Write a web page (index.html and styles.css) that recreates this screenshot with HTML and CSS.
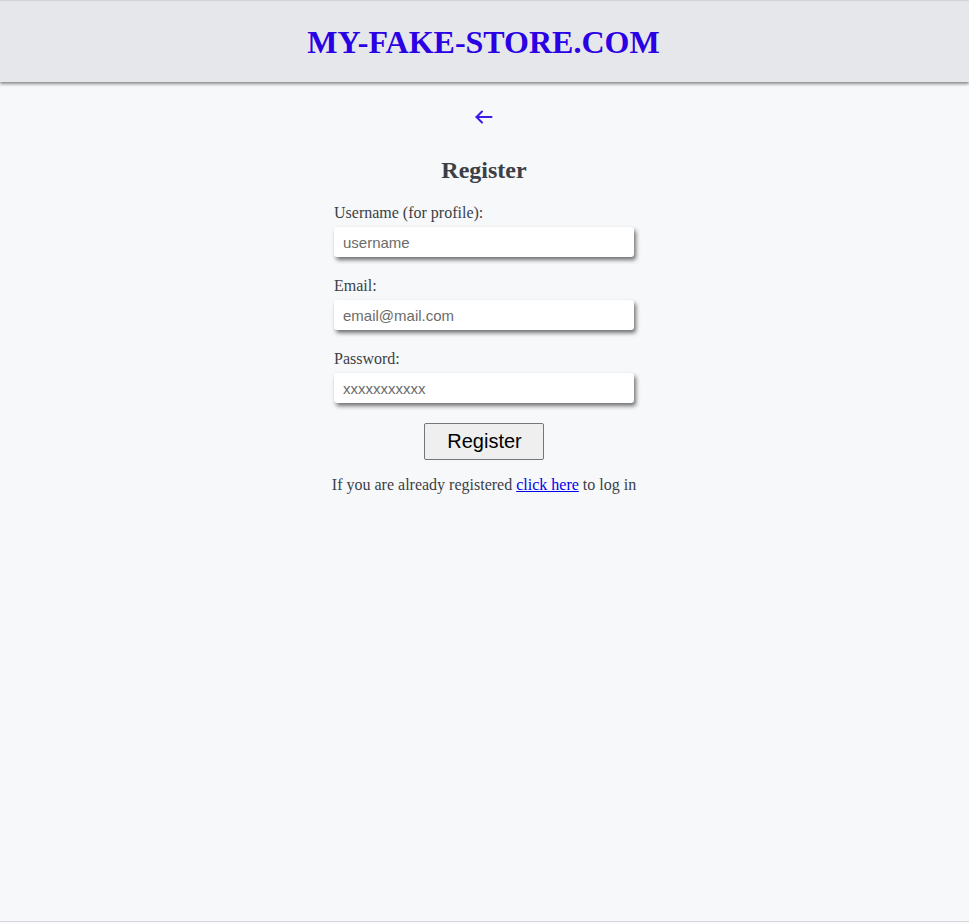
FILE: index.html
```html
<!DOCTYPE html>
<html lang="en">
<head>
<meta charset="utf-8">
<title>Register - MY-FAKE-STORE.COM</title>
<link rel="stylesheet" href="styles.css">
</head>
<body>
<div class="app">
  <header class="site-header">
    <h1 class="brand">MY-FAKE-STORE.COM</h1>
  </header>
  <main class="page">
    <a class="back" href="#" aria-label="Back">
      <svg width="20" height="20" viewBox="0 0 20 20" fill="none" stroke="currentColor" stroke-width="2" stroke-linecap="round" stroke-linejoin="round">
        <path d="M2.5 10 H17.5"/>
        <path d="M8 4.5 L2.5 10 L8 15.5"/>
      </svg>
    </a>
    <h2 class="title">Register</h2>
    <form class="form">
      <div class="field">
        <label class="label" for="username">Username (for profile):</label>
        <input class="input" id="username" type="text" placeholder="username">
      </div>
      <div class="field">
        <label class="label" for="email">Email:</label>
        <input class="input" id="email" type="email" placeholder="email@mail.com">
      </div>
      <div class="field">
        <label class="label" for="password">Password:</label>
        <input class="input" id="password" type="text" placeholder="xxxxxxxxxxx">
      </div>
      <div class="actions">
        <button class="btn" type="button">Register</button>
      </div>
    </form>
    <p class="note">If you are already registered <a href="#" class="link">click here</a> to log in</p>
  </main>
</div>
</body>
</html>
```

FILE: styles.css
```css
* { box-sizing: border-box; }

html, body {
  margin: 0;
  padding: 0;
  background: #f7f8fa;
}

body {
  font-family: "Liberation Serif", "Times New Roman", serif;
  font-size: 16px;
  color: #3b3f46;
}

.app {
  min-height: 922px;
  border-top: 1px solid #d9dbe0;
  border-bottom: 1px solid #d6d8dd;
  display: flex;
  flex-direction: column;
}

.site-header {
  height: 81px;
  background: #e5e7eb;
  border-top: 1px solid #e1e3e7;
  display: flex;
  align-items: center;
  justify-content: center;
  box-shadow: 0 2px 3px rgba(0, 0, 0, 0.45);
  position: relative;
  z-index: 1;
}

.brand {
  margin: 0;
  font-size: 32px;
  font-weight: bold;
  color: #2a00e4;
  line-height: 1;
  transform: translateX(-1px);
}

.page {
  display: flex;
  flex-direction: column;
  align-items: center;
  padding-top: 25px;
  padding-right: 1px;
}

.back {
  display: block;
  width: 20px;
  height: 20px;
  color: #3a1ae9;
}

.back svg { display: block; }

.title {
  margin: 30px 0 20px;
  font-size: 24px;
  line-height: 27px;
  font-weight: bold;
  color: #3b3f46;
}

.form {
  width: 300px;
  display: flex;
  flex-direction: column;
}

.field {
  display: flex;
  flex-direction: column;
  margin-bottom: 20px;
}

.label {
  display: block;
  line-height: 18px;
  margin-bottom: 5px;
}

.input {
  width: 300px;
  height: 30px;
  border: none;
  border-radius: 3px;
  background: #ffffff;
  padding: 0 9px;
  font-family: "Liberation Sans", Arial, sans-serif;
  font-size: 15px;
  color: #222;
  box-shadow: 2px 3px 4px rgba(0, 0, 0, 0.55);
  outline: none;
}

.input::placeholder { color: #6b6b6b; }

.actions {
  display: flex;
  justify-content: center;
}

.btn {
  height: 37px;
  padding: 0 21px 0 22px;
  font-family: "Liberation Sans", Arial, sans-serif;
  font-size: 20px;
  color: #000;
  background: #efefef;
  border: 1px solid #767676;
  border-radius: 2px;
}

.note {
  margin: 16px 0 0;
  line-height: 18px;
}

.link { color: #0000ee; text-decoration: underline; }
```
